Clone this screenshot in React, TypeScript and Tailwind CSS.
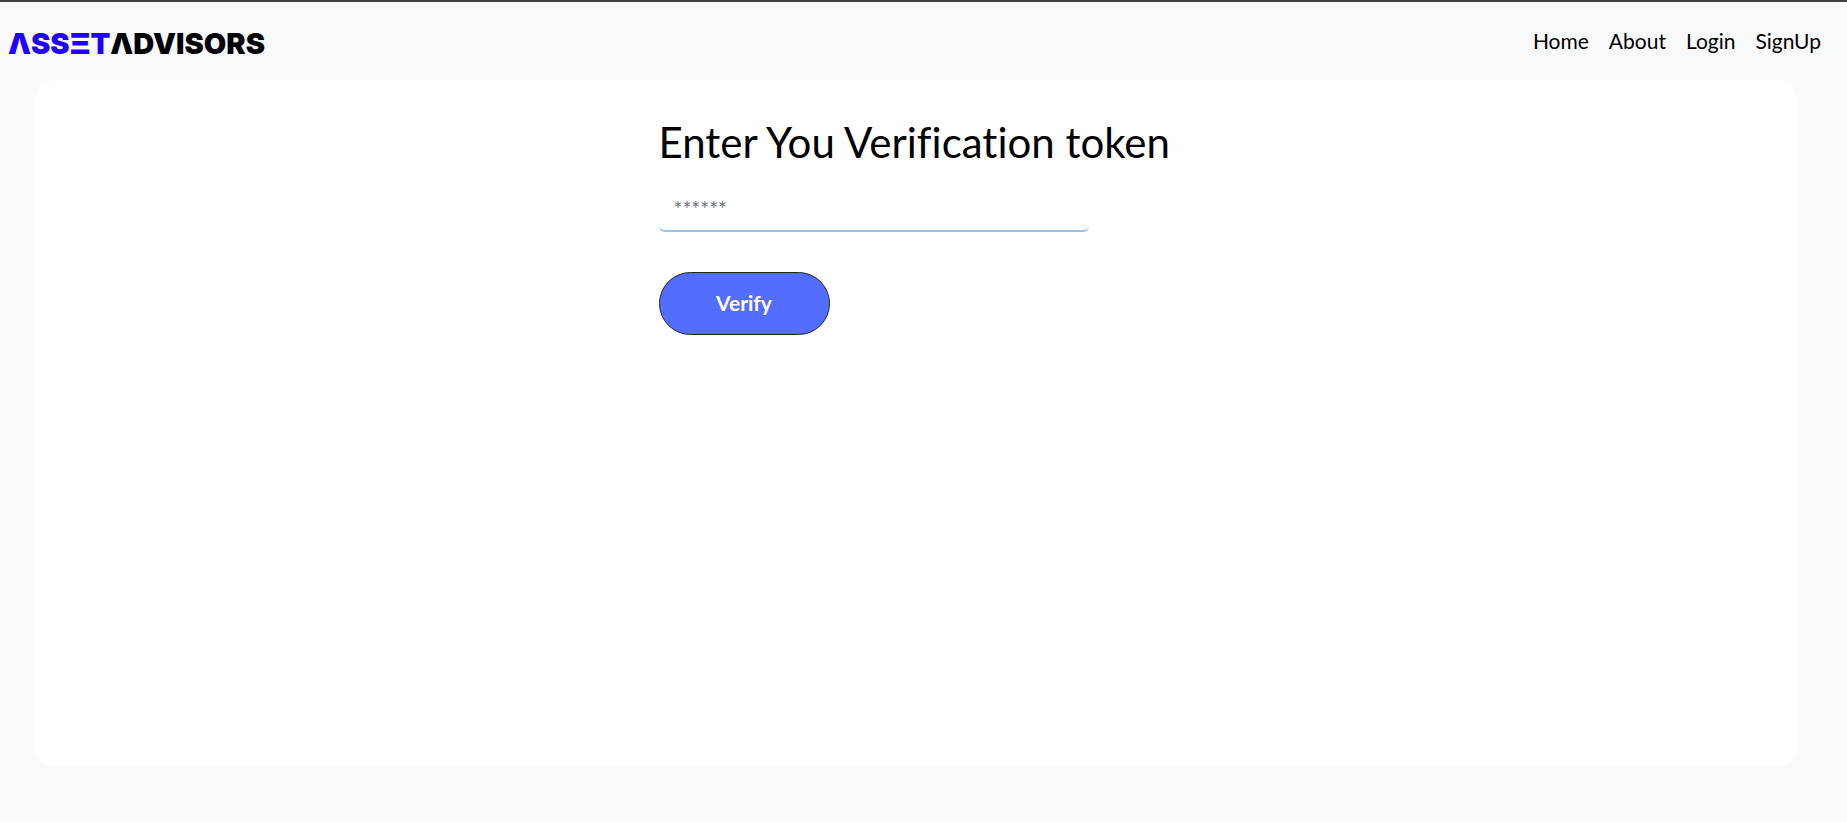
const links = ["Home", "About", "Login", "SignUp"];

function Header() {
  return (
    <header className="flex h-[78px] items-center justify-between pl-2 pr-[26px]">
      <a
        href="#home"
        aria-label="ASSETADVISORS"
        className="mt-1.5 flex font-['Inter',sans-serif] text-[29px] leading-8 font-black"
      >
        <span className="text-[#2200ff]">ΛSSΞT</span>
        <span className="text-black">ΛDVISORS</span>
      </a>
      <nav className="flex gap-5">
        {links.map((link) => (
          <a key={link} href={"#" + link.toLowerCase()} className="text-[21px] leading-8 text-black">
            {link}
          </a>
        ))}
      </nav>
    </header>
  );
}

function VerificationForm() {
  return (
    <form
      className="flex w-[515px] max-w-full flex-col items-start"
      onSubmit={(event) => event.preventDefault()}
    >
      <label
        htmlFor="token"
        className="text-[42px] leading-[48px] text-black [font-variant-ligatures:no-common-ligatures]"
      >
        Enter You Verification token
      </label>
      <input
        id="token"
        type="text"
        placeholder="******"
        className="mt-5 h-[46px] w-[430px] max-w-full rounded-md border-b-2 border-[#8ec5fc] bg-transparent px-[15px] text-[21px] text-black outline-none placeholder:text-[#6c757d]"
      />
      <button
        type="submit"
        className="mt-10 h-[63px] w-[171px] rounded-full border border-[#212529] bg-[#536dfe] pb-0.5 text-[21px] font-bold text-white"
      >
        Verify
      </button>
    </form>
  );
}

export default function App() {
  return (
    <div className="min-h-screen border-t-2 border-[#414144] bg-[#f8f9fb] font-['Lato',sans-serif]">
      <Header />
      <main className="mr-[50px] ml-[35px] flex min-h-[calc(100vh-135px)] items-start justify-center rounded-[20px] bg-white pt-[38px]">
        <VerificationForm />
      </main>
    </div>
  );
}
